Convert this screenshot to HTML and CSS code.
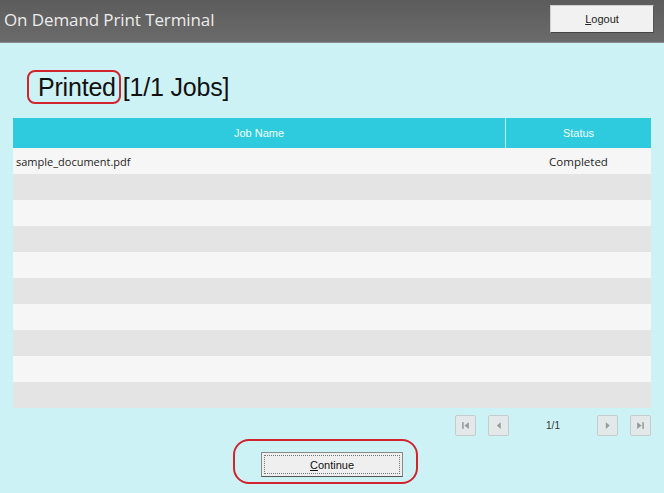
FILE: index.html
```html
<!DOCTYPE html>
<html lang="en">
<head>
<meta charset="utf-8">
<title>On Demand Print Terminal</title>
<link rel="stylesheet" href="styles.css">
</head>
<body>
<header class="topbar">
  <div class="app-title">On Demand Print Terminal</div>
  <button class="logout-btn"><u>L</u>ogout</button>
</header>
<main class="content">
  <h1 class="page-heading"><span class="marked">Printed</span>[1/1 Jobs]</h1>
  <div class="jobs">
    <div class="jobs-head">
      <div class="col-name">Job Name</div>
      <div class="col-status">Status</div>
    </div>
    <div class="job-row odd"><div class="cell-name">sample_document.pdf</div><div class="cell-status">Completed</div></div>
    <div class="job-row even"><div class="cell-name"></div><div class="cell-status"></div></div>
    <div class="job-row odd"><div class="cell-name"></div><div class="cell-status"></div></div>
    <div class="job-row even"><div class="cell-name"></div><div class="cell-status"></div></div>
    <div class="job-row odd"><div class="cell-name"></div><div class="cell-status"></div></div>
    <div class="job-row even"><div class="cell-name"></div><div class="cell-status"></div></div>
    <div class="job-row odd"><div class="cell-name"></div><div class="cell-status"></div></div>
    <div class="job-row even"><div class="cell-name"></div><div class="cell-status"></div></div>
    <div class="job-row odd"><div class="cell-name"></div><div class="cell-status"></div></div>
    <div class="job-row even"><div class="cell-name"></div><div class="cell-status"></div></div>
  </div>
  <div class="pager">
    <button class="pg-btn" aria-label="First page">
      <svg width="9" height="9" viewBox="0 0 8 8"><rect x="1" y="1" width="1.4" height="6" fill="#9a9a9a"/><path d="M7 1 L3 4 L7 7 Z" fill="#9a9a9a"/></svg>
    </button>
    <button class="pg-btn" aria-label="Previous page">
      <svg width="9" height="9" viewBox="0 0 8 8"><path d="M6 1 L2.5 4 L6 7 Z" fill="#9a9a9a"/></svg>
    </button>
    <span class="pg-count">1/1</span>
    <button class="pg-btn" aria-label="Next page">
      <svg width="9" height="9" viewBox="0 0 8 8"><path d="M2.5 1 L6 4 L2.5 7 Z" fill="#9a9a9a"/></svg>
    </button>
    <button class="pg-btn" aria-label="Last page">
      <svg width="9" height="9" viewBox="0 0 8 8"><path d="M1 1 L5 4 L1 7 Z" fill="#9a9a9a"/><rect x="5.6" y="1" width="1.4" height="6" fill="#9a9a9a"/></svg>
    </button>
  </div>
  <div class="actions">
    <div class="ring">
      <button class="continue-btn"><span class="focus"><u>C</u>ontinue</span></button>
    </div>
  </div>
</main>
</body>
</html>
```

FILE: styles.css
```css
* { box-sizing: border-box; }

html, body {
  margin: 0;
  padding: 0;
}

body {
  width: 664px;
  height: 493px;
  overflow: hidden;
  background: #cdf2f5;
  font-family: "Liberation Sans", Arial, sans-serif;
  color: #111;
}

.topbar {
  height: 43px;
  display: flex;
  align-items: center;
  justify-content: space-between;
  padding: 0 10px 0 4px;
  background: linear-gradient(#5c5c5c, #6b6b6b);
  border-bottom: 1px solid #8a8a8a;
}

.app-title {
  font-family: "Open Sans", "Noto Sans", sans-serif;
  font-size: 17px;
  color: #ececec;
  padding-bottom: 4px;
  letter-spacing: -0.1px;
}

.logout-btn {
  width: 104px;
  height: 28px;
  margin-top: -4px;
  background: #f1f1f1;
  border: 1px solid #cfcfcf;
  border-bottom: 1px solid #444;
  border-right: 1px solid #555;
  font-family: "Liberation Sans", Arial, sans-serif;
  font-size: 11px;
  color: #222;
  padding: 0;
}

.content {
  padding: 0 13px;
}

.page-heading {
  margin: 30px 0 17px 0;
  padding-left: 25px;
  font-weight: normal;
  font-size: 25px;
  line-height: 28px;
  height: 28px;
  color: #111;
  letter-spacing: -0.2px;
}

.marked {
  position: relative;
  margin-right: 7px;
}

.marked::before {
  content: "";
  position: absolute;
  left: -11px;
  right: -5px;
  top: -3px;
  bottom: -3px;
  border: 2px solid #d2232e;
  border-radius: 8px;
}

.jobs {
  width: 638px;
}

.jobs-head {
  display: flex;
  height: 30px;
  background: #2ecbde;
  color: #f4ffff;
  font-size: 11px;
}

.col-name,
.col-status {
  display: flex;
  align-items: center;
  justify-content: center;
}

.col-name {
  width: 493px;
  border-right: 1px solid #b8eef5;
}

.col-status {
  flex: 1;
}

.job-row {
  display: flex;
  height: 26px;
  align-items: center;
  font-family: "Open Sans", "Noto Sans", sans-serif;
  font-size: 11px;
  color: #1e1e1e;
}

.job-row.odd { background: #f6f6f6; }
.job-row.even { background: #e4e4e4; }

.cell-name {
  width: 493px;
  padding-left: 3px;
}

.cell-status {
  flex: 1;
  text-align: center;
  font-size: 11.5px;
}

.pager {
  display: flex;
  align-items: center;
  justify-content: flex-end;
  height: 21px;
  margin-top: 7px;
}

.pg-btn {
  width: 21px;
  height: 21px;
  padding: 0;
  background: #e3e8e9;
  border: 1px solid #c4cccd;
  border-radius: 2px;
  display: flex;
  align-items: center;
  justify-content: center;
}

.pg-btn + .pg-btn { margin-left: 12px; }

.pg-count {
  width: 88px;
  text-align: center;
  font-size: 10px;
  color: #333;
}

.actions {
  display: flex;
  justify-content: center;
  margin-top: 16px;
}

.ring {
  position: relative;
  display: flex;
}

.ring::before {
  content: "";
  position: absolute;
  left: -28px;
  right: -15px;
  top: -13px;
  bottom: -7px;
  border: 2.5px solid #d2232e;
  border-radius: 16px;
}

.continue-btn {
  width: 142px;
  height: 25px;
  padding: 2px;
  background: #efefef;
  border: 1px solid #8a8a8a;
  border-bottom-color: #555;
  font-family: "Liberation Sans", Arial, sans-serif;
  font-size: 11px;
  color: #111;
  display: flex;
}

.focus {
  flex: 1;
  display: flex;
  align-items: center;
  justify-content: center;
  border: 1px dotted #777;
}
```
